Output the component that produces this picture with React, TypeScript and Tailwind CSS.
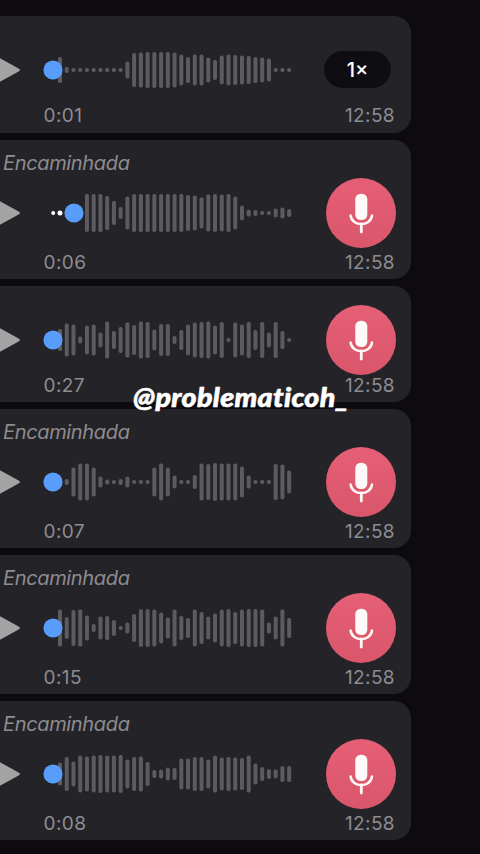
import React from 'react';

type Message = {
  forwarded: boolean;
  duration: string;
  time: string;
  knob: number;
  played: number[];
  bars: number[];
  speed?: string;
  height: string;
};

const messages: Message[] = [
  {
    forwarded: false,
    duration: '0:01',
    time: '12:58',
    knob: 53,
    played: [],
    bars: [26, 6, 4, 4, 4, 4, 4, 4, 4, 4, 17, 34, 35, 36, 36, 36, 36, 35, 31, 26, 31, 31, 25, 20, 29, 31, 30, 29, 28, 26, 25, 23, 4, 4, 4],
    speed: '1×',
    height: 'h-[117px]',
  },
  {
    forwarded: true,
    duration: '0:06',
    time: '12:58',
    knob: 74,
    played: [4, 5],
    bars: [0, 0, 0, 0, 38, 38, 38, 34, 24, 12, 33, 38, 38, 38, 38, 38, 38, 38, 38, 36, 35, 31, 37, 38, 37, 38, 33, 15, 7, 6, 4, 4, 9, 11, 8],
    height: 'h-[139px]',
  },
  {
    forwarded: false,
    duration: '0:27',
    time: '12:58',
    knob: 53,
    played: [],
    bars: [22, 33, 31, 7, 29, 31, 15, 37, 18, 26, 35, 30, 37, 36, 21, 32, 32, 8, 20, 31, 35, 36, 37, 29, 36, 4, 35, 31, 36, 20, 36, 15, 36, 18, 4],
    height: 'h-[116px]',
  },
  {
    forwarded: true,
    duration: '0:07',
    time: '12:58',
    knob: 53,
    played: [],
    bars: [0, 6, 29, 37, 37, 29, 11, 5, 4, 6, 11, 4, 4, 4, 29, 37, 29, 13, 4, 4, 14, 37, 36, 38, 37, 37, 37, 31, 13, 4, 4, 4, 36, 35, 23],
    height: 'h-[139px]',
  },
  {
    forwarded: true,
    duration: '0:15',
    time: '12:58',
    knob: 53,
    played: [],
    bars: [37, 22, 36, 37, 25, 8, 23, 24, 16, 4, 11, 28, 38, 38, 37, 31, 21, 37, 24, 20, 37, 32, 23, 29, 37, 38, 32, 37, 38, 38, 37, 11, 23, 37, 20],
    height: 'h-[139px]',
  },
  {
    forwarded: true,
    duration: '0:08',
    time: '12:58',
    knob: 53,
    played: [],
    bars: [23, 34, 25, 37, 35, 37, 38, 37, 37, 38, 29, 34, 35, 24, 8, 9, 13, 12, 31, 31, 34, 34, 29, 37, 33, 34, 33, 32, 37, 21, 14, 10, 9, 16, 16],
    height: 'h-[139px]',
  },
];

const Waveform = ({ bars, played, knob }: Pick<Message, 'bars' | 'played' | 'knob'>) => (
  <svg width="300" height="40" viewBox="0 0 300 40" className="shrink-0">
    <path d="M-2 7.2 L18.6 18.4 Q21.4 20 18.6 21.6 L-2 32.8 Z" fill="#a3a3a3" />
    {bars.map((h, i) =>
      h > 0 ? (
        <rect key={i} x={58 + i * 6.74} y={20 - h / 2} width="4" height={h} rx="1.8" fill="#5d5b61" />
      ) : null
    )}
    {played.map((d, i) => (
      <circle key={i} cx={53.2 + i * 6.74} cy="20" r={d / 2} fill="#fff" />
    ))}
    <circle cx={knob} cy="20" r="9.6" fill="#589dfa" />
  </svg>
);

const MicBadge = () => (
  <div className="w-[70px] h-[70px] shrink-0 rounded-full bg-linear-to-b from-[#e55f76] to-[#da566a]">
    <svg width="70" height="70" viewBox="0 0 70 70" fill="none">
      <rect x="29.3" y="15.7" width="12" height="26.3" rx="5.4" fill="#fffaf7" />
      <path d="M24.6 37.5 C26 49 44.6 49 46 37.5" stroke="#fffaf7" strokeWidth="2.4" strokeLinecap="round" />
      <path d="M35.3 46 V54" stroke="#fffaf7" strokeWidth="2.8" strokeLinecap="round" />
    </svg>
  </div>
);

const VoiceMessage = ({ message }: { message: Message }) => (
  <div className={`${message.height} w-[411px] shrink-0 rounded-r-[17px] bg-[#242328] flex flex-col`}>
    {message.forwarded && (
      <p className="h-[19px] pt-[11px] pl-[3px] text-[20px] leading-6 tracking-[-0.35px] italic text-[#8d8c90]">
        Encaminhada
      </p>
    )}
    <div className="h-[107px] shrink-0 flex items-center">
      <Waveform bars={message.bars} played={message.played} knob={message.knob} />
      {message.speed ? (
        <div className="ml-6 w-[67px] h-[37px] rounded-full bg-[#0e0d12] text-white text-[20px] font-medium flex items-center justify-center">
          {message.speed}
        </div>
      ) : (
        <div className="ml-[26px]">
          <MicBadge />
        </div>
      )}
    </div>
    <div
      className={`${message.forwarded ? '-mt-[15px]' : '-mt-[19px]'} pl-[43.5px] pr-4 flex justify-between text-[19px] leading-6 tracking-[0.4px] text-[#8d8c90]`}
    >
      <span>{message.duration}</span>
      <span>{message.time}</span>
    </div>
  </div>
);

export default function App() {
  return (
    <div className="relative w-[480px] h-[854px] overflow-hidden bg-[#0d0b10] pt-4 font-['Inter',sans-serif]">
      <div className="flex flex-col gap-[7px]">
        {messages.map((message) => (
          <VoiceMessage key={message.duration} message={message} />
        ))}
      </div>

      {/* watermark over the list */}
      <span className="absolute left-[133px] top-[381px] origin-left scale-x-110 whitespace-nowrap text-[26px] leading-8 tracking-[0.3px] font-black italic text-white font-['Lato',sans-serif] [-webkit-text-stroke:0.6px_white]">
        @problematicoh_
      </span>
    </div>
  );
}
